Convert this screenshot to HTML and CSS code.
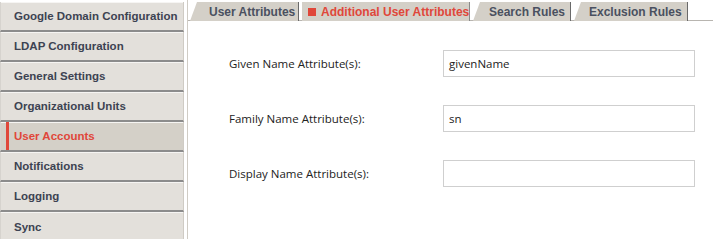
FILE: index.html
```html
<!DOCTYPE html>
<html>
<head>
<meta charset="utf-8">
<link rel="stylesheet" href="styles.css">
</head>
<body>
<div class="app">
  <nav class="sidebar">
    <div class="nav-item">Google Domain Configuration</div>
    <div class="nav-item">LDAP Configuration</div>
    <div class="nav-item">General Settings</div>
    <div class="nav-item">Organizational Units</div>
    <div class="nav-item active">User Accounts</div>
    <div class="nav-item">Notifications</div>
    <div class="nav-item">Logging</div>
    <div class="nav-item">Sync</div>
  </nav>
  <div class="divider"></div>
  <main class="main">
    <div class="tabs">
      <div class="tab t1">User Attributes</div>
      <div class="tab active"><span class="sq"></span>Additional User Attributes</div>
      <div class="tab t3">Search Rules</div>
      <div class="tab t4">Exclusion Rules</div>
    </div>
    <div class="form">
      <div class="row">
        <label class="lbl">Given Name Attribute(s):</label>
        <div class="input">givenName</div>
      </div>
      <div class="row">
        <label class="lbl">Family Name Attribute(s):</label>
        <div class="input">sn</div>
      </div>
      <div class="row">
        <label class="lbl">Display Name Attribute(s):</label>
        <div class="input"></div>
      </div>
    </div>
  </main>
</div>
</body>
</html>
```
FILE: styles.css
```css
* { box-sizing: border-box; }
html, body { margin: 0; padding: 0; background: #fff; }
body { width: 713px; height: 239px; overflow: hidden; }
.app { display: flex; height: 239px; }
.sidebar {
  width: 184px;
  flex: none;
  display: flex;
  flex-direction: column;
  padding-top: 2px;
}
.nav-item {
  height: 30px;
  display: flex;
  align-items: center;
  padding-left: 13px;
  background: #e3e0db;
  border-right: 1px solid #cfcbc4;
  border-left: 1px solid #d6d3ce;
  border-bottom: 2px solid #8c8c8c;
  box-shadow: inset 0 1px 0 #f6f5f3;
  font-family: "Liberation Sans", Arial, sans-serif;
  font-weight: bold;
  font-size: 11.5px;
  white-space: nowrap;
  color: #3d4352;
  flex: none;
}
.nav-item:last-child { border-bottom: none; }
.nav-item.active {
  background: #d4d0c8;
  color: #e0473a;
  position: relative;
}
.nav-item.active::before {
  content: "";
  position: absolute;
  left: 5px;
  top: 0;
  bottom: 0;
  width: 3px;
  background: #e0473a;
}
.divider {
  width: 4px;
  flex: none;
  border-left: 1px solid #fff;
  border-right: 1px solid #d0ccc5;
}
.main { flex: 1; display: flex; flex-direction: column; min-width: 0; }
.tabs {
  display: flex;
  height: 21px;
  border-bottom: 1px solid #b8b5b0;
  padding-left: 2px;
  padding-top: 2px;
}
.tab {
  height: 19px;
  background: #d4d0c8;
  font-family: "Liberation Sans", Arial, sans-serif;
  font-weight: bold;
  font-size: 12px;
  white-space: nowrap;
  color: #4a5060;
  display: flex;
  align-items: center;
  flex: none;
  padding: 0 4px 0 18px;
  margin-right: 3px;
  clip-path: polygon(7px 0, 100% 0, 100% 100%, 0 100%);
  border-right: 1px solid #6a6a6a;
}
.tab.t1 { width: 109px; padding-left: 19px; }
.tab.active {
  width: 168px;
  color: #e0473a;
  padding-left: 6px;
  clip-path: none;
  border-right: 1px solid #8a8a8a;
}
.tab.t3 { width: 98px; padding-left: 16px; }
.tab.t4 { width: 114px; padding-left: 15px; }
.sq {
  display: inline-block;
  width: 8px;
  height: 8px;
  background: #e0473a;
  margin-right: 5px;
  flex: none;
}
.form {
  padding: 29px 0 0 41px;
  display: flex;
  flex-direction: column;
  gap: 28px;
}
.row { display: flex; align-items: center; height: 27px; }
.lbl {
  width: 214px;
  font-family: "Open Sans", "Segoe UI", sans-serif;
  font-size: 11.5px;
  color: #222;
}
.input {
  width: 252px;
  height: 27px;
  border: 1px solid #cfcfcf;
  padding-left: 5px;
  display: flex;
  align-items: center;
  font-family: "Open Sans", "Segoe UI", sans-serif;
  font-size: 11.5px;
  color: #222;
}
```
